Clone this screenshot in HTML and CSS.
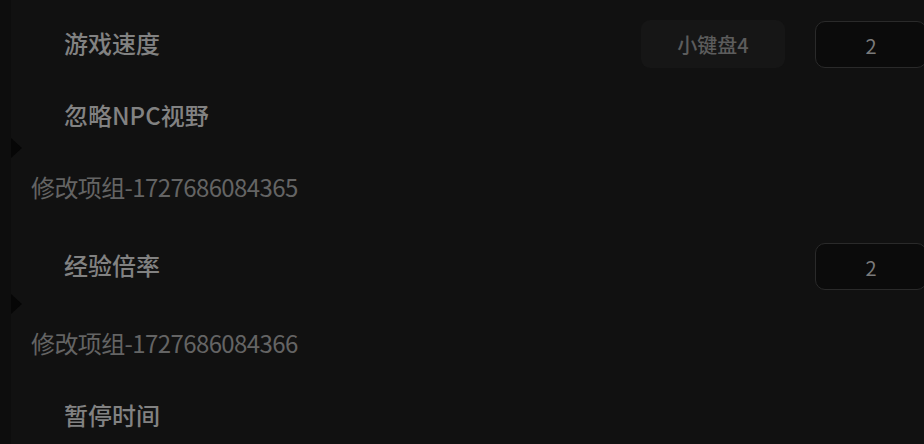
FILE: index.html
```html
<!DOCTYPE html>
<html lang="zh-CN">
<head>
<meta charset="utf-8">
<title>修改项</title>
<link rel="stylesheet" href="styles.css">
</head>
<body>
<div class="page">
  <div class="strip"></div>
  <div class="list">
    <div class="item">
      <span class="label">游戏速度</span>
      <div class="controls">
        <button class="hotkey">小键盘4</button>
        <div class="value">2</div>
      </div>
    </div>
    <div class="item">
      <span class="label">忽略NPC视野</span>
    </div>
    <div class="group group-first">
      <span class="group-label">修改项组-1727686084365</span>
    </div>
    <div class="item">
      <span class="label">经验倍率</span>
      <div class="controls">
        <div class="value">2</div>
      </div>
    </div>
    <div class="group group-second">
      <span class="group-label">修改项组-1727686084366</span>
    </div>
    <div class="item">
      <span class="label">暂停时间</span>
    </div>
  </div>
</div>
</body>
</html>
```

FILE: styles.css
```css
html, body {
  margin: 0;
  padding: 0;
  background: #111111;
  overflow: hidden;
  height: 444px;
}

.page {
  display: flex;
  width: 927px;
  min-height: 444px;
  font-family: "Noto Sans CJK SC", "Noto Sans", sans-serif;
}

.strip {
  width: 11px;
  flex: none;
  background: #0d0d0d;
}

.list {
  flex: 1;
  display: flex;
  flex-direction: column;
  padding-top: 7px;
}

.item {
  height: 72px;
  display: flex;
  align-items: center;
  padding-left: 53px;
}

.label {
  font-size: 24px;
  font-weight: 500;
  color: #828282;
  line-height: 30px;
}

.controls {
  margin-left: auto;
  display: flex;
  align-items: center;
  gap: 30px;
  padding-top: 2px;
}

.hotkey {
  width: 144px;
  height: 48px;
  border: none;
  border-radius: 9px;
  background: #161616;
  color: #5c5c5c;
  font-family: "Noto Sans CJK SC", "Noto Sans", sans-serif;
  font-size: 20px;
  font-weight: 500;
  padding: 0;
}

.value {
  width: 110px;
  height: 43px;
  border: 1px solid #2a2a2a;
  border-radius: 10px;
  background: #0b0b0b;
  color: #7a7a7a;
  font-size: 20px;
  display: flex;
  align-items: center;
  justify-content: center;
  padding-top: 2px;
}

.group {
  position: relative;
  height: 72px;
  display: flex;
  align-items: center;
  padding-left: 20px;
}

.group-first {
  padding-bottom: 6px;
}

.group-second {
  padding-top: 6px;
}

.group-label {
  position: relative;
  font-size: 24px;
  color: #646464;
  line-height: 30px;
  letter-spacing: -0.6px;
}

.group-label::before {
  content: "";
  position: absolute;
  left: -20px;
  top: -34px;
  width: 0;
  height: 0;
  border-left: 11px solid #060606;
  border-top: 10.5px solid transparent;
  border-bottom: 10.5px solid transparent;
}
```
